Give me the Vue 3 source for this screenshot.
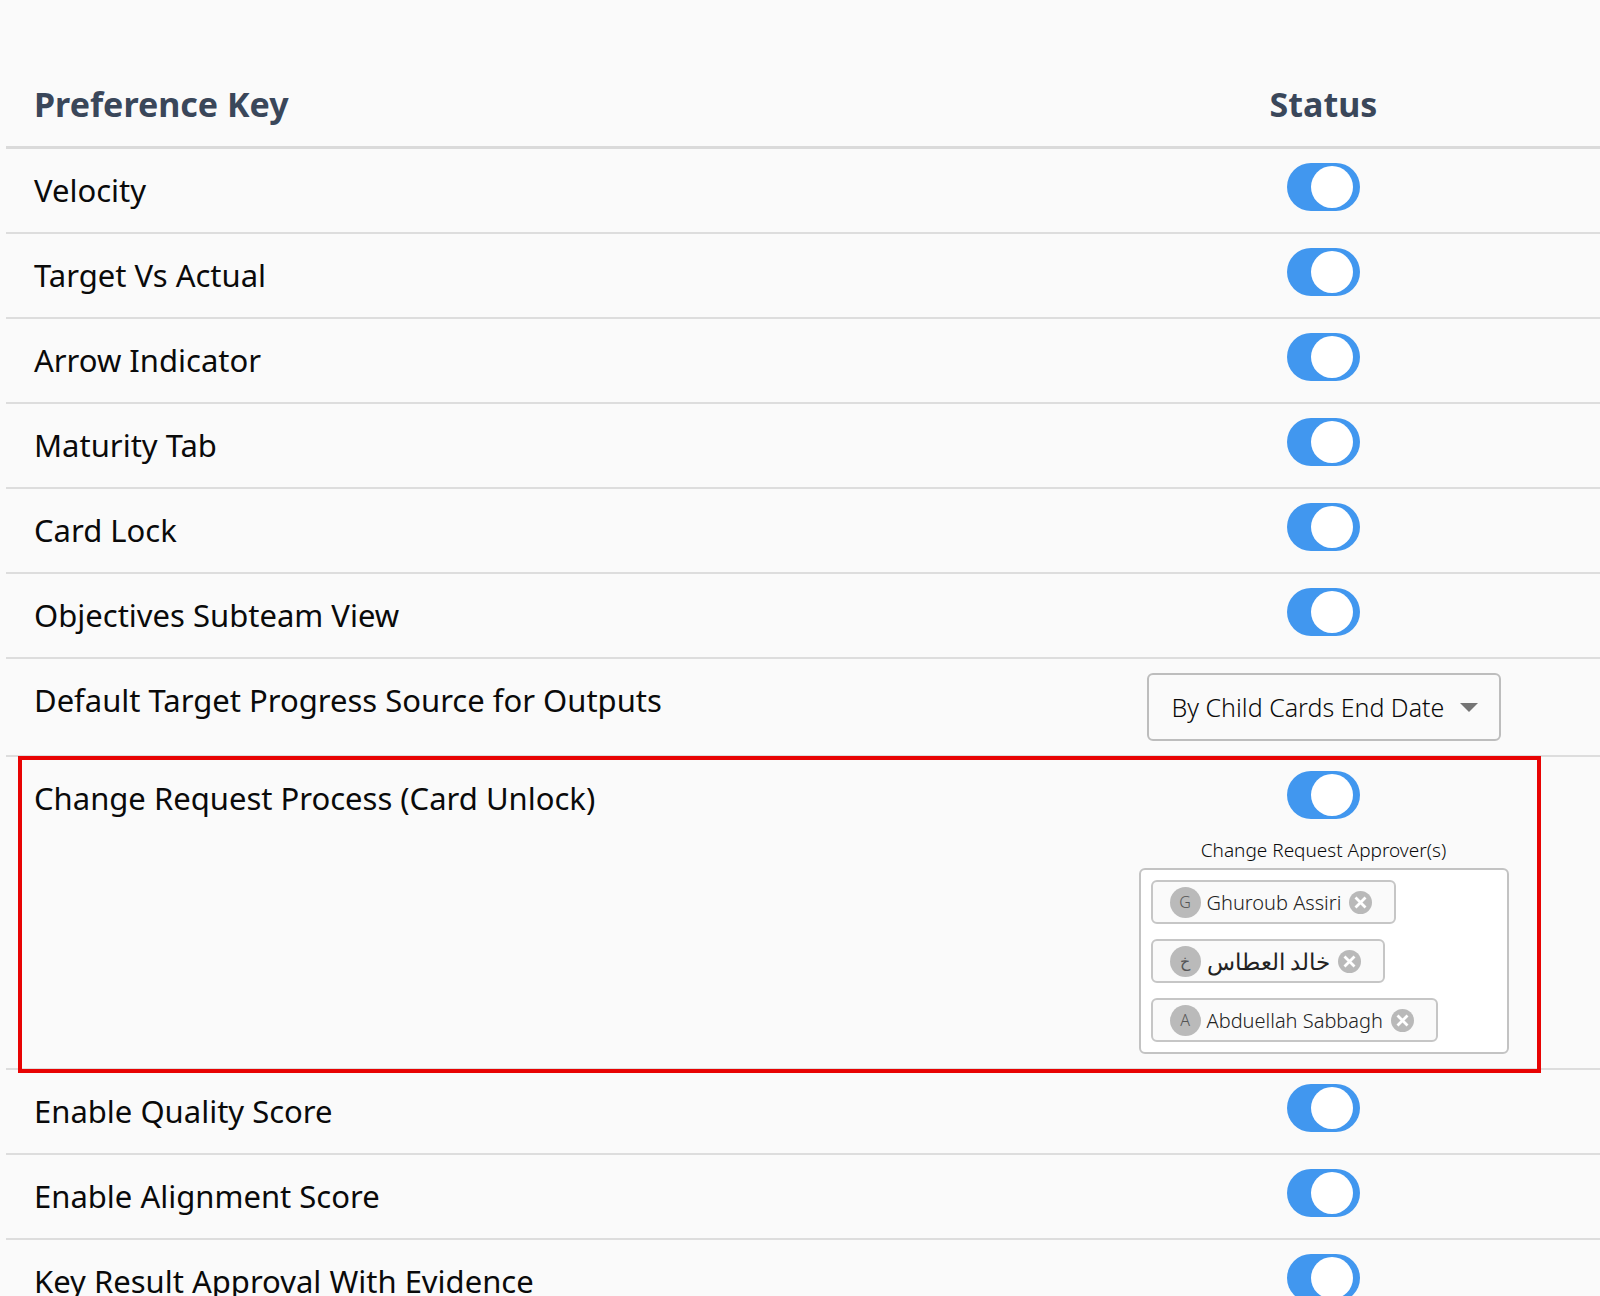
<template>
  <main class="preferences">
    <table class="pref-table">
      <thead>
        <tr>
          <th class="key-col" scope="col">Preference Key</th>
          <th class="status-col" scope="col">Status</th>
        </tr>
      </thead>
      <tbody>
        <tr
            v-for="pref in preferences"
            :key="pref.id"
            :class="{ highlighted: pref.type === 'approvers' }"
        >
          <td class="key-cell">
            <label :for="pref.id">{{ pref.name }}</label>
          </td>
          <td class="status-cell">
            <div v-if="pref.type === 'select'" class="select-box">
              <select :id="pref.id" v-model="pref.value">
                <option v-for="option in sources" :key="option">{{ option }}</option>
              </select>
              <svg class="arrow" viewBox="0 0 18 9" aria-hidden="true">
                <path d="M0 0h18L9 9z" fill="#757575" />
              </svg>
            </div>
            <input v-else :id="pref.id" v-model="pref.value" class="toggle" type="checkbox" />

            <div v-if="pref.type === 'approvers' && pref.value" class="approvers">
              <h3 id="approvers-title">Change Request Approver(s)</h3>
              <ul aria-labelledby="approvers-title">
                <li v-for="person in approvers" :key="person.name">
                  <span class="avatar">{{ person.initial }}</span>
                  <span class="name" :lang="person.lang">{{ person.name }}</span>
                  <button type="button" :aria-label="person.name" @click="removeApprover(person)">
                    <svg viewBox="0 0 23 23" aria-hidden="true">
                      <circle cx="11.5" cy="11.5" r="11.5" fill="#b9b9b9" />
                      <path d="M6.5 6.5l10 10M16.5 6.5l-10 10" stroke="#fff" stroke-width="2.8" />
                    </svg>
                  </button>
                </li>
              </ul>
            </div>
          </td>
        </tr>
      </tbody>
    </table>
  </main>
</template>

<script setup>
import { ref } from 'vue'

const sources = ['By Child Cards End Date']

const preferences = ref([
  { id: 'velocity', name: 'Velocity', value: true },
  { id: 'target-actual', name: 'Target Vs Actual', value: true },
  { id: 'arrow', name: 'Arrow Indicator', value: true },
  { id: 'maturity', name: 'Maturity Tab', value: true },
  { id: 'card-lock', name: 'Card Lock', value: true },
  { id: 'subteam', name: 'Objectives Subteam View', value: true },
  {
    id: 'progress-source',
    name: 'Default Target Progress Source for Outputs',
    type: 'select',
    value: sources[0],
  },
  {
    id: 'change-request',
    name: 'Change Request Process (Card Unlock)',
    type: 'approvers',
    value: true,
  },
  { id: 'quality', name: 'Enable Quality Score', value: true },
  { id: 'alignment', name: 'Enable Alignment Score', value: true },
  { id: 'evidence', name: 'Key Result Approval With Evidence', value: true },
])

const approvers = ref([
  { initial: 'G', name: 'Ghuroub Assiri', lang: 'en' },
  { initial: 'خ', name: 'خالد العطاس', lang: 'ar' },
  { initial: 'A', name: 'Abduellah Sabbagh', lang: 'en' },
])

function removeApprover(person) {
  approvers.value = approvers.value.filter((item) => item !== person)
}
</script>

<style>
body {
  background: #fafafa;
}
</style>

<style scoped>
.preferences {
  padding: 60px 0 0 6px;
  font-family: "Noto Sans", "DejaVu Sans", sans-serif;
  color: #0a0a0a;
}
.pref-table {
  width: 100%;
  table-layout: fixed;
  border-collapse: separate;
  border-spacing: 0;
}
th {
  padding: 2px 0 0;
  border-bottom: 3px solid #dadada;
  font-size: 34px;
  line-height: 84px;
  font-weight: 700;
  color: #3a475a;
}
.key-col {
  padding-left: 28px;
  text-align: left;
}
.status-col {
  width: 553px;
}
td {
  padding: 14px 0;
  border-bottom: 2px solid #dddddd;
  vertical-align: top;
}
.key-cell {
  padding: 20px 0 21px 28px;
  font-size: 31px;
  line-height: 42px;
}
.status-cell {
  text-align: center;
}
/* frame around the whole row, positioned against the tr */
.highlighted {
  position: relative;
}
.highlighted .key-cell::after {
  content: "";
  position: absolute;
  top: -1px;
  right: 59px;
  bottom: -3px;
  left: 12px;
  border: 4px solid #e80303;
  pointer-events: none;
}
.toggle {
  appearance: none;
  display: block;
  width: 73px;
  height: 48px;
  margin: 0 auto;
  padding: 3px 7px;
  box-sizing: border-box;
  border-radius: 24px;
  background: #bdbdbd;
  cursor: pointer;
}
.toggle::before {
  content: "";
  display: block;
  width: 42px;
  height: 42px;
  border-radius: 50%;
  background: #fff;
}
.toggle:checked {
  background: #4197ef;
}
.toggle:checked::before {
  margin-left: auto;
}
.select-box {
  position: relative;
  width: 354px;
  margin: 0 auto;
}
select {
  appearance: none;
  display: block;
  width: 100%;
  height: 68px;
  padding: 0 48px 0 23px;
  border: 2px solid #bdbdbd;
  border-radius: 6px;
  background: #fafafa;
  font-family: inherit;
  font-size: 25px;
  font-weight: 300;
  color: #0a0a0a;
}
.arrow {
  position: absolute;
  top: 30px;
  right: 23px;
  width: 18px;
  height: 9px;
  pointer-events: none;
}
.approvers {
  width: 370px;
  margin: 0 auto;
}
.approvers h3 {
  margin: 0;
  padding: 17px 0 4px;
  font-size: 19px;
  line-height: 28px;
  font-weight: 300;
}
.approvers ul {
  display: flex;
  flex-direction: column;
  align-items: flex-start;
  gap: 15px;
  margin: 0;
  padding: 10px;
  border: 2px solid #c3c3c3;
  border-radius: 6px;
  background: #fff;
  list-style: none;
}
.approvers li {
  display: flex;
  align-items: center;
  gap: 6px;
  height: 44px;
  box-sizing: border-box;
  padding: 0 22px 0 17px;
  border: 2px solid #c6c6c6;
  border-radius: 6px;
  background: #fafafa;
  font-size: 20px;
  font-weight: 300;
  color: #222;
}
.name:lang(ar) {
  font-size: 23px;
}
.avatar {
  width: 31px;
  height: 31px;
  border-radius: 50%;
  background: #bababa;
  font-size: 16px;
  line-height: 31px;
  text-align: center;
  color: #555;
}
.approvers button {
  width: 23px;
  height: 23px;
  margin-left: 2px;
  padding: 0;
  border: 0;
  background: none;
  cursor: pointer;
}
.approvers svg {
  display: block;
}
</style>
